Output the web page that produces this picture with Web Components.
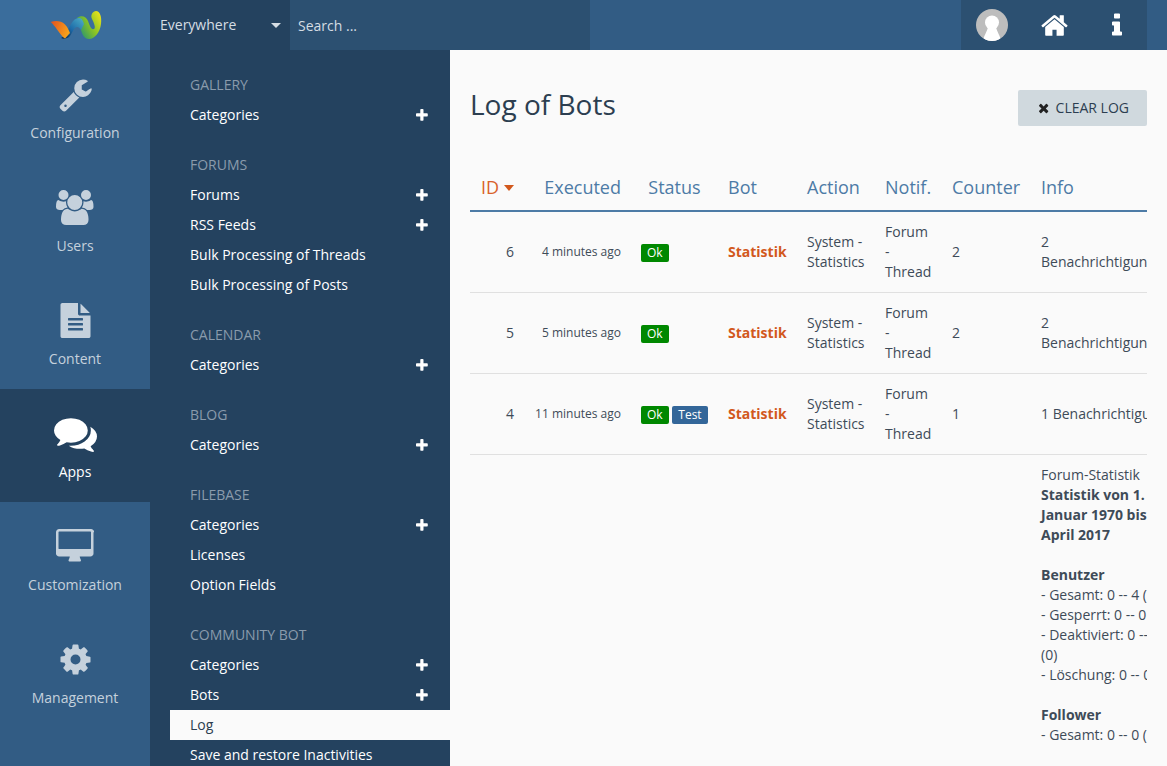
<!DOCTYPE html>
<html>
<head>
<meta charset="utf-8">
<title>Log of Bots</title>
<style>
html,body{margin:0;height:766px;overflow:hidden;}
body{font:14px/20px "Open Sans",sans-serif;background:#fafafa;color:#2c3e50;}
</style>
</head>
<body>
<acp-page>
  <acp-header slot="header"></acp-header>
  <acp-mainmenu slot="mainmenu"></acp-mainmenu>
  <acp-submenu slot="submenu"></acp-submenu>
  <bot-log slot="content"></bot-log>
</acp-page>

<script>
const ICONS={
  wrench:[1792,'M448 1472q0-26-19-45t-45-19-45 19-19 45 19 45 45 19 45-19 19-45zm644-420l-682 682q-37 37-90 37-52 0-91-37l-106-108q-38-36-38-90 0-53 38-91l681-681q39 98 114.500 173.500t173.500 114.500zm634-435q0 39-23 106-47 134-164.500 217.500t-258.500 83.500q-185 0-316.500-131.500t-131.500-316.500 131.500-316.500 316.500-131.500q58 0 121.500 16.500t107.500 46.500q16 11 16 28t-16 28l-293 169v224l193 107q5-3 79-48.500t135.500-81 70.500-35.500q15 0 23.500 10t8.500 25z'],
  users:[1920,'M593 896q-162 5-265 128h-134q-82 0-138-40.500t-56-118.500q0-353 124-353 6 0 43.500 21t97.500 42.500 119 21.500q67 0 133-23-5 37-5 66 0 139 81 256zm1071 637q0 120-73 189.500t-194 69.500h-874q-121 0-194-69.500t-73-189.500q0-53 3.500-103.500t14-109 26.500-108.500 43-97.500 62-81 85.500-53.500 111.500-20q10 0 43 21.500t73 48 107 48 135 21.500 135-21.500 107-48 73-48 43-21.500q61 0 111.500 20t85.500 53.500 62 81 43 97.500 26.500 108.500 14 109 3.500 103.500zm-1024-1277q0 106-75 181t-181 75-181-75-75-181 75-181 181-75 181 75 75 181zm704 384q0 159-112.500 271.500t-271.500 112.500-271.500-112.500-112.500-271.500 112.500-271.500 271.500-112.500 271.500 112.500 112.500 271.500zm576 225q0 78-56 118.500t-138 40.500h-134q-103-123-265-128 81-117 81-256 0-29-5-66 66 23 133 23 59 0 119-21.500t97.500-42.500 43.500-21q124 0 124 353zm-128-609q0 106-75 181t-181 75-181-75-75-181 75-181 181-75 181 75 75 181z'],
  file:[1792,'M1596 476q14 14 28 36h-472v-472q22 14 36 28zm-476 164h544v1056q0 40-28 68t-68 28h-1344q-40 0-68-28t-28-68v-1600q0-40 28-68t68-28h800v544q0 40 28 68t68 28zm160 736v-64q0-14-9-23t-23-9h-704q-14 0-23 9t-9 23v64q0 14 9 23t23 9h704q14 0 23-9t9-23zm0-256v-64q0-14-9-23t-23-9h-704q-14 0-23 9t-9 23v64q0 14 9 23t23 9h704q14 0 23-9t9-23zm0-256v-64q0-14-9-23t-23-9h-704q-14 0-23 9t-9 23v64q0 14 9 23t23 9h704q14 0 23-9t9-23z'],
  comments:[1792,'M1408 768q0 139-94 257t-256.500 186.500-353.500 68.500q-86 0-176-16-124 88-278 128-36 9-86 16h-3q-11 0-20.500-8t-11.500-21q-1-3-1-6.500t.5-6.500 2-6l2.500-5 3.500-5.500 4-5 4.500-5 4-4.500q5-6 23-25t26-29.500 22.500-29 25-38.500 20.500-44q-124-72-195-177t-71-224q0-139 94-257t256.500-186.500 353.500-68.500 353.500 68.500 256.500 186.500 94 257zm384 256q0 120-71 224.500t-195 176.500q10 24 20.500 44t25 38.500 22.500 29 26 29.500 23 25q1 1 4 4.500t4.500 5 4 5 3.500 5.500l2.500 5 2 6 .5 6.500-1 6.500q-3 14-13 22t-22 7q-50-7-86-16-154-40-278-128-90 16-176 16-271 0-472-132 58 4 88 4 161 0 309-45t264-129q125-92 192-212t67-254q0-77-23-152 129 71 204 178t75 230z'],
  desktop:[1920,'M1792 992v-832q0-13-9.500-22.500t-22.500-9.500h-1600q-13 0-22.500 9.500t-9.500 22.500v832q0 13 9.500 22.500t22.500 9.500h1600q13 0 22.500-9.500t9.500-22.500zm128-832v1088q0 66-47 113t-113 47h-544q0 37 16 77.500t32 71 16 43.500q0 26-19 45t-45 19h-512q-26 0-45-19t-19-45q0-14 16-44t32-70 16-78h-544q-66 0-113-47t-47-113v-1088q0-66 47-113t113-47h1632q66 0 113 47t47 113z'],
  cog:[1792,'M1152 896q0-106-75-181t-181-75-181 75-75 181 75 181 181 75 181-75 75-181zm512-109v222q0 12-8 23t-20 13l-185 28q-19 54-39 91 35 50 107 138 10 12 10 25t-9 23q-27 37-99 108t-94 71q-12 0-26-9l-138-108q-44 23-91 38-16 136-29 186-7 28-36 28h-222q-14 0-24.500-8.500t-11.500-21.500l-28-184q-49-16-90-37l-141 107q-10 9-25 9-14 0-25-11-126-114-165-168-7-10-7-23 0-12 8-23 15-21 51-66.500t54-70.500q-27-50-41-99l-183-27q-13-2-21-12.500t-8-23.500v-222q0-12 8-23t19-13l186-28q14-46 39-92-40-57-107-138-10-12-10-24 0-10 9-23 26-36 98.500-107.500t94.500-71.500q13 0 26 10l138 107q44-23 91-38 16-136 29-186 7-28 36-28h222q14 0 24.500 8.500t11.500 21.500l28 184q49 16 90 37l142-107q9-9 24-9 13 0 25 10 129 119 165 170 7 8 7 22 0 12-8 23-15 21-51 66.500t-54 70.500q26 50 41 98l183 28q13 2 21 12.500t8 23.500z'],
  home:[1792,'M1472 992v480q0 26-19 45t-45 19h-384v-384h-256v384h-384q-26 0-45-19t-19-45v-480q0-1 .5-3t.5-3l575-474 575 474q1 2 1 6zm223-69l-62 74q-8 9-21 11h-3q-13 0-21-7l-692-577-692 577q-12 8-24 7-13-2-21-11l-62-74q-8-10-7-23.500t11-21.500l719-599q32-26 76-26t76 26l244 204v-195q0-14 9-23t23-9h192q14 0 23 9t9 23v408l219 182q10 8 11 21.500t-7 23.500z'],
  info:[704,'M704 1376v128q0 26-19 45t-45 19h-512q-26 0-45-19t-19-45v-128q0-26 19-45t45-19h64v-384h-64q-26 0-45-19t-19-45v-128q0-26 19-45t45-19h384q26 0 45 19t19 45v576h64q26 0 45 19t19 45zm-128-1152v192q0 26-19 45t-45 19h-256q-26 0-45-19t-19-45v-192q0-26 19-45t45-19h256q26 0 45 19t19 45z'],
  plus:[1408,'M1408 736v192q0 40-28 68t-68 28h-416v416q0 40-28 68t-68 28h-192q-40 0-68-28t-28-68v-416h-416q-40 0-68-28t-28-68v-192q0-40 28-68t68-28h416v-416q0-40 28-68t68-28h192q40 0 68 28t28 68v416h416q40 0 68 28t28 68z'],
  times:[1188,'M1188 1322q0 40-28 68l-136 136q-28 28-68 28t-68-28l-294-294-294 294q-28 28-68 28t-68-28l-136-136q-28-28-28-68t28-68l294-294-294-294q-28-28-28-68t28-68l136-136q28-28 68-28t68 28l294 294 294-294q28-28 68-28t68 28l136 136q28 28 28 68t-28 68l-294 294 294 294q28 28 28 68z']
};
function icon(name,size){
  const [w,d]=ICONS[name];
  return `<svg width="${w/1792*size}" height="${size}" viewBox="0 0 ${w} 1792" fill="currentColor"><path d="${d}"/></svg>`;
}

class AcpPage extends HTMLElement{
  constructor(){
    super();
    this.attachShadow({mode:'open'});
    this.shadowRoot.innerHTML=`
<style>
:host{display:grid;grid-template:50px 716px / 150px 300px 717px;width:1167px;height:766px;overflow:hidden;}
::slotted([slot=header]){grid-column:1 / -1;}
</style>
<slot name="header"></slot>
<slot name="mainmenu"></slot>
<slot name="submenu"></slot>
<slot name="content"></slot>`;
  }
}

class AcpHeader extends HTMLElement{
  constructor(){
    super();
    this.attachShadow({mode:'open'});
    this.shadowRoot.innerHTML=`
<style>
:host{display:flex;height:50px;background:#325c84;color:#fff;}
.logo{width:150px;background:#3a6d9c;display:flex;align-items:center;justify-content:center;}
.logo svg{margin:0 0 0 1px;}
.scope{width:140px;background:#24425f;color:#d5dde4;display:flex;align-items:center;justify-content:space-between;padding:0 9px 0 10px;box-sizing:border-box;}
.caret{width:0;height:0;border:5px solid transparent;border-top-color:#d5dde4;border-bottom:0;}
.search{width:300px;background:#2c5071;color:#d5dde4;display:flex;align-items:center;padding:1px 0 0 8px;box-sizing:border-box;}
.spacer{flex:1;}
.tools{width:186px;margin-right:20px;background:#2c5071;display:flex;align-items:center;}
.tools div{display:flex;align-items:center;justify-content:center;height:50px;width:62px;}
.avatar svg{display:block;}
</style>
<div class="logo">
  <svg width="52" height="30" viewBox="0 0 52 30">
    <defs>
      <linearGradient id="lo" x1="0" y1="0" x2="1" y2=".4"><stop offset="0" stop-color="#e2501f"/><stop offset="1" stop-color="#f7a11a"/></linearGradient>
      <linearGradient id="lb" x1="0" y1="1" x2="1" y2="0"><stop offset="0" stop-color="#0e2238"/><stop offset=".45" stop-color="#1c69a8"/><stop offset="1" stop-color="#4fb0c8"/></linearGradient>
      <linearGradient id="lg" x1="0" y1=".8" x2="1" y2=".1"><stop offset="0" stop-color="#1f8f78"/><stop offset=".5" stop-color="#86c226"/><stop offset="1" stop-color="#f0e41a"/></linearGradient>
    </defs>
    <path fill="url(#lg)" d="M27 8C31 5 36 6 38 11C40 16 41 20 44 19C46 18 44 13 42 9C40 5 43 1 46 1C50 1 52 7 51 14C50 22 45 29 39 29C34 29 32 24 31 20C30 16 30 11 27 8Z"/>
    <path fill="url(#lb)" d="M11 28C15 27 18 20 21 14C23 10 26 8 29 8C32 8 33 11 34 14L31 20C29 17 27 16 25 18C22 21 21 27 17 28C15 29 13 29 11 28Z"/>
    <path fill="url(#lo)" d="M.7 12C5 10.500 11 10.500 15 14.500C18 17.500 19 21 20 23L15 28.500C12 27 10 23 7 19.500C5 16.500 3 14 .7 12Z"/>
  </svg>
</div>
<div class="scope"><span>Everywhere</span><span class="caret"></span></div>
<div class="search">Search ...</div>
<div class="spacer"></div>
<div class="tools">
  <div class="avatar"><svg width="32" height="32" viewBox="0 0 32 32"><defs><clipPath id="c"><circle cx="16" cy="16" r="16"/></clipPath></defs><g clip-path="url(#c)"><rect width="32" height="32" fill="#bdbdbd"/><circle cx="16" cy="13.500" r="7" fill="#fff"/><path fill="#fff" d="M12 18h8c1 5 4 8 5 14H7c1-6 4-9 5-14z"/></g></svg></div>
  <div class="home">${icon('home',29)}</div>
  <div class="info">${icon('info',28)}</div>
</div>`;
  }
}

class MenuItem extends HTMLElement{
  constructor(){
    super();
    this.attachShadow({mode:'open'});
    this.shadowRoot.innerHTML=`
<style>
:host{display:flex;flex-direction:column;align-items:center;height:113px;padding-top:26px;box-sizing:border-box;color:#c5d1dc;}
:host([active]){background:#24425f;color:#fff;}
.ic{height:36px;display:flex;justify-content:center;align-items:center;}
.lb{margin-top:11px;}
</style>
<div class="ic"></div><div class="lb"><slot></slot></div>`;
  }
  connectedCallback(){
    this.shadowRoot.querySelector('.ic').innerHTML=icon(this.getAttribute('icon'),this.getAttribute('size')||35);
  }
}

class AcpMainmenu extends HTMLElement{
  constructor(){
    super();
    this.attachShadow({mode:'open'});
    this.shadowRoot.innerHTML=`
<style>
:host{display:block;background:#325c84;}
</style>
<menu-item icon="wrench">Configuration</menu-item>
<menu-item icon="users">Users</menu-item>
<menu-item icon="file">Content</menu-item>
<menu-item icon="comments" size="43" active>Apps</menu-item>
<menu-item icon="desktop">Customization</menu-item>
<menu-item icon="cog">Management</menu-item>`;
  }
}

class SubmenuSection extends HTMLElement{
  constructor(){
    super();
    this.attachShadow({mode:'open'});
    this.shadowRoot.innerHTML=`
<style>
:host{display:block;margin-bottom:20px;}
h3{margin:0;font:inherit;line-height:30px;padding-left:40px;text-transform:uppercase;color:#8a9bac;}
</style>
<h3></h3><slot></slot>`;
  }
  connectedCallback(){
    this.shadowRoot.querySelector('h3').textContent=this.getAttribute('title');
  }
}

class SubmenuLink extends HTMLElement{
  constructor(){
    super();
    this.attachShadow({mode:'open'});
    this.shadowRoot.innerHTML=`
<style>
:host{display:flex;align-items:center;justify-content:space-between;height:30px;margin-left:20px;padding:0 22px 0 20px;color:#fff;}
:host([active]){background:#fafafa;color:#2c3e50;}
.plus{display:flex;}
</style>
<span><slot></slot></span><span class="plus"></span>`;
  }
  connectedCallback(){
    if(this.hasAttribute('add')) this.shadowRoot.querySelector('.plus').innerHTML=icon('plus',15);
  }
}

class AcpSubmenu extends HTMLElement{
  constructor(){
    super();
    this.attachShadow({mode:'open'});
    this.shadowRoot.innerHTML=`
<style>
:host{display:block;background:#24425f;padding-top:20px;overflow:hidden;}
</style>
<submenu-section title="Gallery"><submenu-link add>Categories</submenu-link></submenu-section>
<submenu-section title="Forums">
  <submenu-link add>Forums</submenu-link>
  <submenu-link add>RSS Feeds</submenu-link>
  <submenu-link>Bulk Processing of Threads</submenu-link>
  <submenu-link>Bulk Processing of Posts</submenu-link>
</submenu-section>
<submenu-section title="Calendar"><submenu-link add>Categories</submenu-link></submenu-section>
<submenu-section title="Blog"><submenu-link add>Categories</submenu-link></submenu-section>
<submenu-section title="Filebase">
  <submenu-link add>Categories</submenu-link>
  <submenu-link>Licenses</submenu-link>
  <submenu-link>Option Fields</submenu-link>
</submenu-section>
<submenu-section title="Community Bot">
  <submenu-link add>Categories</submenu-link>
  <submenu-link add>Bots</submenu-link>
  <submenu-link active>Log</submenu-link>
  <submenu-link>Save and restore Inactivities</submenu-link>
</submenu-section>`;
  }
}

class StatusBadge extends HTMLElement{
  constructor(){
    super();
    this.attachShadow({mode:'open'});
    this.shadowRoot.innerHTML=`
<style>
:host{display:inline-block;background:#080;color:#fff;font-size:12px;line-height:14px;padding:2px 6px;border-radius:2px;}
:host([test]){background:#336699;}
</style>
<slot></slot>`;
  }
}

class BotLog extends HTMLElement{
  constructor(){
    super();
    this.attachShadow({mode:'open'});
    const rows=[
      [6,'4 minutes ago','2 Benachrichtigungen','2',false],
      [5,'5 minutes ago','2 Benachrichtigungen','2',false],
      [4,'11 minutes ago','1 Benachrichtigung','1',true]
    ];
    this.shadowRoot.innerHTML=`
<style>
:host{display:block;background:#fafafa;padding:40px 20px 0;overflow:hidden;color:#3e4b58;}
.head{display:flex;justify-content:space-between;align-items:flex-start;}
h1{margin:-1px 0 0;font-size:28px;font-weight:400;line-height:31px;color:#2c3e50;}
.btn{display:flex;align-items:center;gap:7px;height:36px;padding:0 18px 0 21px;background:#d0d9de;border-radius:2px;color:#2c3e50;}
.btn svg{color:#222;}
.wrap{overflow:hidden;margin-top:39px;}
table{border-collapse:collapse;table-layout:fixed;width:716px;}
th{font-size:18px;font-weight:400;color:#4d7ba6;height:43px;padding:0 10px 2px;text-align:left;border-bottom:2px solid #4d7ba6;}
th.sort{color:#d9622b;padding-left:11px;}
.caret{display:inline-block;width:0;height:0;border:5px solid transparent;border-top:6px solid #d2581c;border-bottom:0;margin-left:5px;vertical-align:3px;}
td{padding:10px;vertical-align:middle;border-bottom:1px solid #e0e0e0;}
.id{text-align:right;padding-right:20px;}
td.time{font-size:12px;text-align:right;white-space:nowrap;padding-left:0;}
.bot{font-weight:700;color:#d2581c;}
.badges{white-space:nowrap;}
td.detail{border:0;vertical-align:top;}
b{font-weight:700;}
</style>
<div class="head"><h1>Log of Bots</h1><div class="btn">${icon('times',14)}<span>CLEAR LOG</span></div></div>
<div class="wrap">
<table>
<colgroup><col style="width:64px"><col style="width:97px"><col style="width:87px"><col style="width:79px"><col style="width:78px"><col style="width:67px"><col style="width:89px"><col style="width:155px"></colgroup>
<thead><tr><th class="sort">ID<span class="caret"></span></th><th style="text-align:right">Executed</th><th style="text-align:center">Status</th><th>Bot</th><th>Action</th><th>Notif.</th><th>Counter</th><th>Info</th></tr></thead>
<tbody>
${rows.map(r=>`<tr><td class="id">${r[0]}</td><td class="time">${r[1]}</td><td class="badges"><status-badge>Ok</status-badge>${r[4]?' <status-badge test>Test</status-badge>':''}</td><td class="bot">Statistik</td><td>System - Statistics</td><td>Forum - Thread</td><td>${r[3]}</td><td>${r[2]}</td></tr>`).join('')}
<tr><td class="detail" colspan="7"></td><td class="detail">Forum-Statistik<br><b>Statistik von 1. Januar 1970 bis April 2017</b><br><br><b>Benutzer</b><br>- Gesamt: 0 -- 4 (0)<br>- Gesperrt: 0 -- 0 (0)<br>- Deaktiviert: 0 -- 0 (0)<br>- Löschung: 0 -- 0 (0)<br><br><b>Follower</b><br>- Gesamt: 0 -- 0 (0)</td></tr>
</tbody>
</table>
</div>`;
  }
}

customElements.define('acp-page',AcpPage);
customElements.define('acp-header',AcpHeader);
customElements.define('menu-item',MenuItem);
customElements.define('acp-mainmenu',AcpMainmenu);
customElements.define('submenu-section',SubmenuSection);
customElements.define('submenu-link',SubmenuLink);
customElements.define('acp-submenu',AcpSubmenu);
customElements.define('status-badge',StatusBadge);
customElements.define('bot-log',BotLog);
</script>
</body>
</html>
